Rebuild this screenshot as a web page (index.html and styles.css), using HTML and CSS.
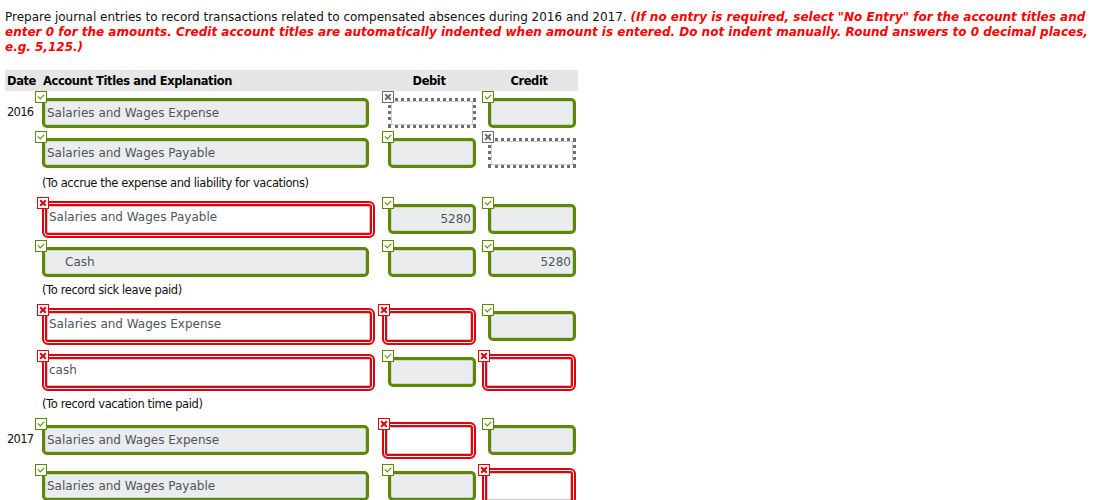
FILE: index.html
```html
<!DOCTYPE html>
<html>
<head>
<meta charset="utf-8">
<link rel="stylesheet" href="styles.css">
</head>
<body>
<div class="page">
  <p class="instr">Prepare journal entries to record transactions related to compensated absences during 2016 and 2017. <em class="note">(If no entry is required, select "No Entry" for the account titles and<br>enter 0 for the amounts. Credit account titles are automatically indented when amount is entered. Do not indent manually. Round answers to 0 decimal places,<br>e.g. 5,125.)</em></p>

  <div class="journal">
    <div class="head">
      <div class="h-date">Date</div>
      <div class="h-acct">Account Titles and Explanation</div>
      <div class="h-num">Debit</div>
      <div class="h-num">Credit</div>
    </div>

    <div class="row">
      <div class="date">2016</div>
      <div class="cell acct"><span class="mark ok"></span><div class="field ok">Salaries and Wages Expense</div></div>
      <div class="cell num"><span class="mark na"></span><div class="field na"></div></div>
      <div class="cell num"><span class="mark ok"></span><div class="field ok"></div></div>
    </div>

    <div class="row">
      <div class="date"></div>
      <div class="cell acct"><span class="mark ok"></span><div class="field ok">Salaries and Wages Payable</div></div>
      <div class="cell num"><span class="mark ok"></span><div class="field ok"></div></div>
      <div class="cell num"><span class="mark na"></span><div class="field na"></div></div>
    </div>
    <div class="expl">(To accrue the expense and liability for vacations)</div>

    <div class="row mid">
      <div class="date"></div>
      <div class="cell acct"><span class="mark bad"></span><div class="field bad">Salaries and Wages Payable</div></div>
      <div class="cell num"><span class="mark ok"></span><div class="field ok">5280</div></div>
      <div class="cell num"><span class="mark ok"></span><div class="field ok"></div></div>
    </div>

    <div class="row">
      <div class="date"></div>
      <div class="cell acct"><span class="mark ok"></span><div class="field ok indent">Cash</div></div>
      <div class="cell num"><span class="mark ok"></span><div class="field ok"></div></div>
      <div class="cell num"><span class="mark ok"></span><div class="field ok">5280</div></div>
    </div>
    <div class="expl short">(To record sick leave paid)</div>

    <div class="row tall">
      <div class="date"></div>
      <div class="cell acct"><span class="mark bad"></span><div class="field bad">Salaries and Wages Expense</div></div>
      <div class="cell num"><span class="mark bad"></span><div class="field bad"></div></div>
      <div class="cell num"><span class="mark ok"></span><div class="field ok"></div></div>
    </div>

    <div class="row tall">
      <div class="date"></div>
      <div class="cell acct"><span class="mark bad"></span><div class="field bad">cash</div></div>
      <div class="cell num"><span class="mark ok"></span><div class="field ok"></div></div>
      <div class="cell num"><span class="mark bad"></span><div class="field bad"></div></div>
    </div>
    <div class="expl tight">(To record vacation time paid)</div>

    <div class="row tall">
      <div class="date">2017</div>
      <div class="cell acct"><span class="mark ok"></span><div class="field ok">Salaries and Wages Expense</div></div>
      <div class="cell num"><span class="mark bad"></span><div class="field bad"></div></div>
      <div class="cell num"><span class="mark ok"></span><div class="field ok"></div></div>
    </div>

    <div class="row">
      <div class="date"></div>
      <div class="cell acct"><span class="mark ok"></span><div class="field ok">Salaries and Wages Payable</div></div>
      <div class="cell num"><span class="mark ok"></span><div class="field ok"></div></div>
      <div class="cell num"><span class="mark bad"></span><div class="field bad"></div></div>
    </div>
  </div>
</div>
</body>
</html>
```

FILE: styles.css
```css
html, body {
  margin: 0;
  padding: 0;
  background: #fff;
}
.page {
  padding: 0 5px;
  font-family: "DejaVu Sans", Verdana, sans-serif;
  color: #111;
}
.instr {
  margin: 0;
  padding-top: 10px;
  font-size: 12px;
  line-height: 15px;
  white-space: nowrap;
}
.note {
  color: #f00;
  font-weight: bold;
  font-style: italic;
}
.journal {
  width: 573px;
  margin-top: 15px;
}
.head {
  display: grid;
  grid-template-columns: 37px 346px 100px 90px;
  height: 21px;
  align-items: center;
  background: #e6e6e6;
  font-size: 11.5px;
  letter-spacing: -0.4px;
  font-weight: bold;
  color: #000;
}
.h-date { padding-left: 2px; }
.h-acct { padding-left: 1px; }
.h-num {
  width: 88px;
  padding-right: 6px;
  box-sizing: border-box;
  text-align: center;
}
.row {
  display: grid;
  grid-template-columns: 37px 346px 100px 90px;
  height: 40px;
  box-sizing: border-box;
  padding-top: 7px;
}
.row.mid { height: 43px; }
.row.tall { height: 46px; }
.date {
  padding-left: 2px;
  font-size: 11.5px;
  letter-spacing: -0.7px;
  line-height: 29px;
  color: #111;
}
.cell {
  position: relative;
}
.acct .field { width: 327px; }
.num .field { width: 88px; text-align: right; }
.field {
  box-sizing: border-box;
  height: 30px;
  font-size: 12px;
  line-height: 24px;
  color: #4e5561;
  white-space: nowrap;
  overflow: hidden;
}
.field.ok {
  border: 3px solid #5b8a00;
  border-radius: 5px;
  background: #ebecee;
  box-shadow: inset 0 0 0 1px #d2d3d6;
  padding: 0 2px;
}
.field.indent { padding-left: 20px; }
.field.na {
  border: 3px dotted #6f6f6f;
  background: #fff;
  box-shadow: inset 0 0 0 1px #cfcfcf;
}
.field.bad {
  border: 2px solid #e4000b;
  border-radius: 6px;
  background: #fff;
  box-shadow: inset 0 0 0 1px #fff, inset 0 0 0 3px #e4000b, inset 0 0 0 4px #c9c9c9;
  height: 37px;
  line-height: 29px;
  padding: 0 5px;
}
.acct .field.bad {
  width: 333px;
  margin: -3px 0 -4px 0;
}
.num .field.bad {
  width: 94px;
  margin: -3px 0 -4px -6px;
}
.mark {
  position: absolute;
  top: -7px;
  left: -7px;
  width: 12px;
  height: 12px;
  box-sizing: border-box;
  background: #fff;
  border: 1px solid #5b8a00;
  z-index: 2;
}
.num .mark { left: -6px; }
.acct .mark.bad { left: -5px; }
.num .mark.bad { left: -10px; }
.mark.ok::after {
  content: "";
  position: absolute;
  left: 2px;
  top: 2px;
  width: 5px;
  height: 3px;
  border-left: 1.5px solid #5b8a00;
  border-bottom: 1.5px solid #5b8a00;
  transform: rotate(-45deg);
}
.mark.bad { border-color: #e4000b; }
.mark.na { border-color: #6f6f6f; }
.mark.bad::before, .mark.bad::after,
.mark.na::before, .mark.na::after {
  content: "";
  position: absolute;
  left: 1px;
  top: 4px;
  width: 8px;
  height: 2px;
  background: #e4000b;
  transform: rotate(45deg);
}
.mark.bad::after, .mark.na::after { transform: rotate(-45deg); }
.mark.na::before, .mark.na::after { background: #6f6f6f; }
.expl {
  padding: 4px 0 6px 37px;
  font-size: 11.5px;
  letter-spacing: -0.4px;
  line-height: 16px;
  color: #111;
}
.expl.short { padding-top: 2px; }
.expl.tight { padding-top: 0; }
```
